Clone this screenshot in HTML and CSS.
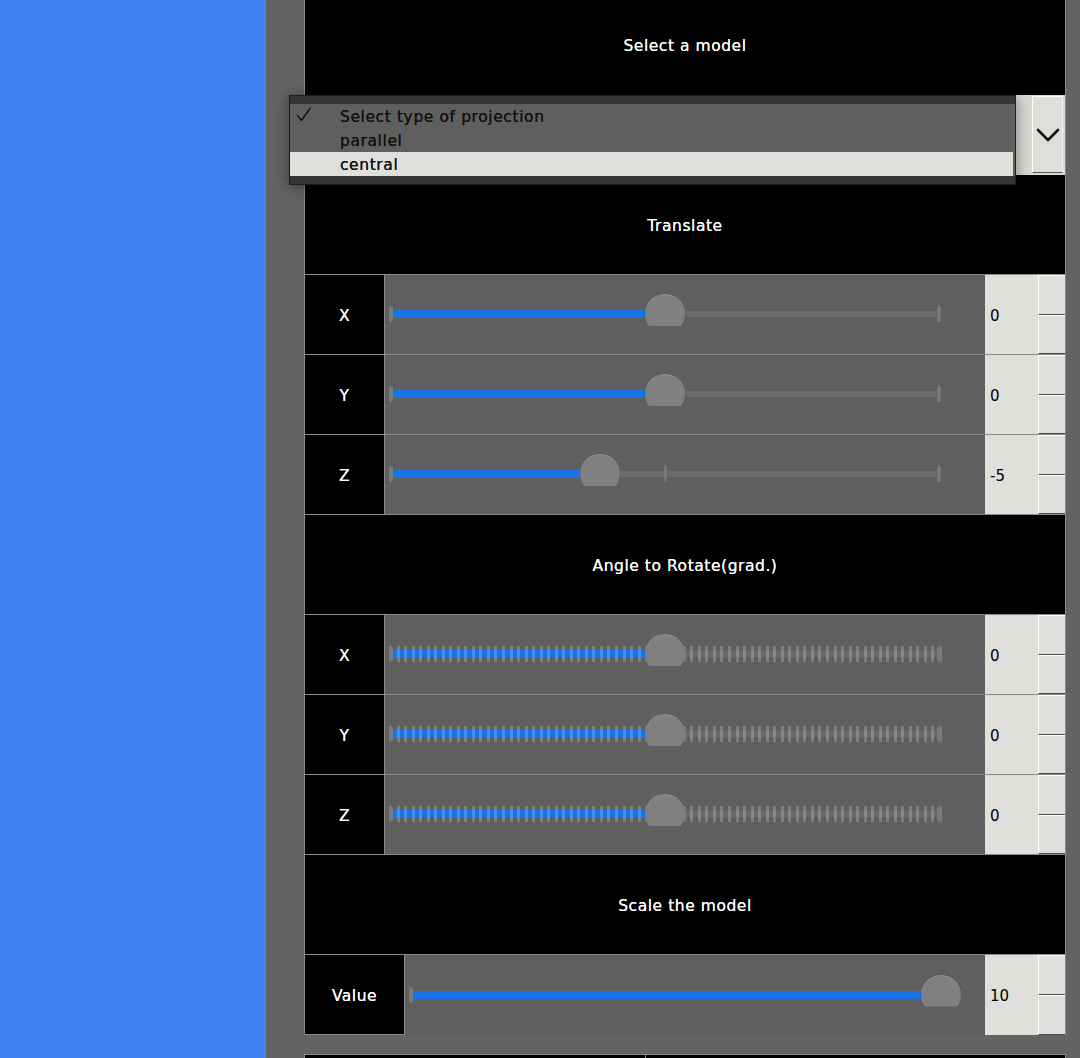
FILE: index.html
```html
<!DOCTYPE html>
<html>
<head>
<meta charset="utf-8">
<link rel="stylesheet" href="styles.css">
</head>
<body>
<div class="app">
  <aside class="sidebar"></aside>
  <main class="panel">
    <div class="column">
      <div class="header header-top">Select a model</div>
      <div class="combo">
        <div class="combo-field"></div>
        <div class="combo-btn">
          <svg width="24" height="16" viewBox="0 0 24 16"><polyline points="2,3 12,13 22,3" fill="none" stroke="#111" stroke-width="2.6" stroke-linecap="round" stroke-linejoin="round"/></svg>
        </div>
      </div>

      <div class="header">Translate</div>
      <div class="row">
        <div class="label">X</div>
        <div class="slider-cell"><div class="slider"><div class="track"></div><div class="fill" style="width:276px"></div><div class="cap cap-l"></div><div class="cap cap-r"></div><div class="thumb" style="left:256px"></div></div></div>
        <div class="spin"><div class="spin-field">0</div><div class="spin-btns"><div class="sb"></div><div class="sb"></div></div></div>
      </div>
      <div class="row">
        <div class="label">Y</div>
        <div class="slider-cell"><div class="slider"><div class="track"></div><div class="fill" style="width:276px"></div><div class="cap cap-l"></div><div class="cap cap-r"></div><div class="thumb" style="left:256px"></div></div></div>
        <div class="spin"><div class="spin-field">0</div><div class="spin-btns"><div class="sb"></div><div class="sb"></div></div></div>
      </div>
      <div class="row">
        <div class="label">Z</div>
        <div class="slider-cell"><div class="slider"><div class="track"></div><div class="fill" style="width:212px"></div><div class="cap cap-l"></div><div class="cap cap-r"></div><div class="cap cap-m"></div><div class="thumb" style="left:191px"></div></div></div>
        <div class="spin"><div class="spin-field">-5</div><div class="spin-btns"><div class="sb"></div><div class="sb"></div></div></div>
      </div>

      <div class="header">Angle to Rotate(grad.)</div>
      <div class="row">
        <div class="label">X</div>
        <div class="slider-cell"><div class="slider"><div class="track"></div><div class="fill" style="width:276px"></div><div class="ticks"></div><div class="cap cap-l"></div><div class="cap cap-r"></div><div class="thumb" style="left:256px"></div></div></div>
        <div class="spin"><div class="spin-field">0</div><div class="spin-btns"><div class="sb"></div><div class="sb"></div></div></div>
      </div>
      <div class="row">
        <div class="label">Y</div>
        <div class="slider-cell"><div class="slider"><div class="track"></div><div class="fill" style="width:276px"></div><div class="ticks"></div><div class="cap cap-l"></div><div class="cap cap-r"></div><div class="thumb" style="left:256px"></div></div></div>
        <div class="spin"><div class="spin-field">0</div><div class="spin-btns"><div class="sb"></div><div class="sb"></div></div></div>
      </div>
      <div class="row">
        <div class="label">Z</div>
        <div class="slider-cell"><div class="slider"><div class="track"></div><div class="fill" style="width:276px"></div><div class="ticks"></div><div class="cap cap-l"></div><div class="cap cap-r"></div><div class="thumb" style="left:256px"></div></div></div>
        <div class="spin"><div class="spin-field">0</div><div class="spin-btns"><div class="sb"></div><div class="sb"></div></div></div>
      </div>

      <div class="header">Scale the model</div>
      <div class="row row-last">
        <div class="label label-wide">Value</div>
        <div class="slider-cell"><div class="slider"><div class="track"></div><div class="fill" style="width:532px"></div><div class="cap cap-l"></div><div class="thumb" style="left:512px"></div></div></div>
        <div class="spin"><div class="spin-field">10</div><div class="spin-btns"><div class="sb"></div><div class="sb"></div></div></div>
      </div>
    </div>
    <div class="bottom">
      <div class="bbtn"></div>
      <div class="bbtn"></div>
    </div>
  </main>

  <div class="popup">
    <div class="popup-strip"></div>
    <div class="item"><svg class="check" width="16" height="16" viewBox="0 0 16 16"><polyline points="1.5,8.5 5.5,13.5 14,1.5" fill="none" stroke="#111" stroke-width="1.4" stroke-linecap="round" stroke-linejoin="round"/></svg>Select type of projection</div>
    <div class="item">parallel</div>
    <div class="item item-active">central</div>
    <div class="popup-strip"></div>
  </div>
</div>
</body>
</html>
```

FILE: styles.css
```css
html, body {
  margin: 0;
  padding: 0;
  height: 100%;
  overflow: hidden;
}
body {
  font-family: "DejaVu Sans", "Liberation Sans", sans-serif;
  background: #636363;
}
.app {
  display: flex;
  height: 1058px;
  position: relative;
}
.sidebar {
  width: 266px;
  flex: none;
  background: #4283f3;
}
.panel {
  flex: 1;
  background: #636363;
  padding-left: 38px;
  display: flex;
  flex-direction: column;
}
.column {
  width: 760px;
  border-left: 1px solid #8a8a8a;
  border-right: 1px solid #8a8a8a;
  display: flex;
  flex-direction: column;
}
.header {
  height: 100px;
  flex: none;
  box-sizing: border-box;
  padding-top: 2px;
  background: #000;
  color: #fff;
  font-size: 15.5px;
  letter-spacing: 0.55px;
  display: flex;
  align-items: center;
  justify-content: center;
  border-bottom: 1px solid #8a8a8a;
  text-shadow: 0 0 0.4px #fff;
}
.header.header-top {
  height: 95px;
  border-bottom: none;
  padding-top: 0;
  padding-bottom: 4px;
}
.combo {
  height: 80px;
  flex: none;
  background: #d9d9d5;
  display: flex;
  justify-content: flex-end;
  align-items: flex-start;
}
.combo-field { flex: 1; }
.combo-btn {
  width: 29px;
  height: 75px;
  margin-top: 1px;
  margin-right: 2px;
  background: #dededa;
  border-left: 1px solid #fff;
  border-top: 1px solid #fff;
  border-right: 1px solid #f2f2f0;
  border-bottom: 1px solid #555;
  display: flex;
  align-items: center;
  justify-content: center;
}
.row {
  height: 80px;
  flex: none;
  box-sizing: border-box;
  display: flex;
  border-bottom: 1px solid #8a8a8a;
}
.label {
  width: 80px;
  flex: none;
  box-sizing: border-box;
  padding-top: 2px;
  background: #000;
  color: #fff;
  font-size: 15.5px;
  letter-spacing: 0.5px;
  text-shadow: 0 0 0.4px #fff;
  border-right: 1px solid #8a8a8a;
  display: flex;
  align-items: center;
  justify-content: center;
}
.label.label-wide { width: 100px; }
.slider-cell {
  flex: 1;
  background: #5f5f5f;
  display: flex;
  align-items: center;
  padding-left: 4px;
}
.slider {
  position: relative;
  width: 552px;
  height: 40px;
  margin-top: -1px;
}
.track {
  position: absolute;
  left: 0;
  right: 0;
  top: 17px;
  height: 6px;
  border-radius: 3px;
  background: #6b6b6b;
}
.fill {
  position: absolute;
  left: 1px;
  top: 16px;
  height: 8px;
  border-radius: 4px 0 0 4px;
  background: #1a73e8;
}
.ticks {
  position: absolute;
  left: 0;
  width: 553px;
  top: 12px;
  height: 16px;
  background: repeating-linear-gradient(90deg, rgba(255,255,255,0.2) 0, rgba(255,255,255,0.2) 3px, transparent 3px, transparent 7.534px);
  border-radius: 2px;
}
.cap {
  position: absolute;
  top: 12px;
  width: 4px;
  height: 16px;
  border-radius: 2px;
  background: #797979;
}
.cap-l { left: 0; }
.cap-r { right: 0; }
.cap-m { left: 275px; width: 3px; background: #777; }
.thumb {
  position: absolute;
  top: 0;
  width: 40px;
  height: 40px;
  border-radius: 50%;
  background: #808080;
  box-shadow: inset 0 1px 0 #8e8e8e, 0 0 1px rgba(0,0,0,0.4);
  clip-path: inset(-2px -2px 8px -2px);
}
.spin {
  width: 80px;
  flex: none;
  display: flex;
  background: #dfdfdb;
}
.spin-field {
  flex: 1;
  font-size: 15px;
  color: #000;
  display: flex;
  align-items: center;
  padding-left: 5px;
  padding-top: 2px;
}
.spin-btns {
  width: 27px;
  display: flex;
  flex-direction: column;
}
.sb {
  flex: 1;
  background: #dfdfdb;
  border-top: 1px solid #fff;
  border-left: 1px solid #fff;
  border-bottom: 1px solid #4a4a4a;
}
.row.row-last { border-bottom: none; }
.row-last .label { border-bottom: 1px solid #8a8a8a; }
.bottom {
  margin-top: 19px;
  width: 760px;
  border: 1px solid #8a8a8a;
  border-bottom: none;
  display: flex;
  flex: 1;
}
.bbtn {
  background: #000;
  flex: none;
  width: 340px;
  border-right: 1px solid #8a8a8a;
}
.bbtn + .bbtn {
  flex: 1;
  border-right: none;
}
.popup {
  position: absolute;
  left: 289px;
  top: 95px;
  width: 725px;
  border: 1px solid #1e1e1e;
  background: #5f5f5f;
  box-shadow: 0 2px 14px rgba(0,0,0,0.45);
}
.popup-strip {
  height: 8px;
  background: #353535;
}
.item {
  height: 24px;
  line-height: 26px;
  padding-left: 50px;
  font-size: 15.5px;
  letter-spacing: 0.6px;
  color: #111;
  text-shadow: 0 0 0.4px #111;
  position: relative;
  margin-right: 2px;
}
.item-active { background: #dfdfdb; }
.check {
  position: absolute;
  left: 6px;
  top: 3px;
}
```
